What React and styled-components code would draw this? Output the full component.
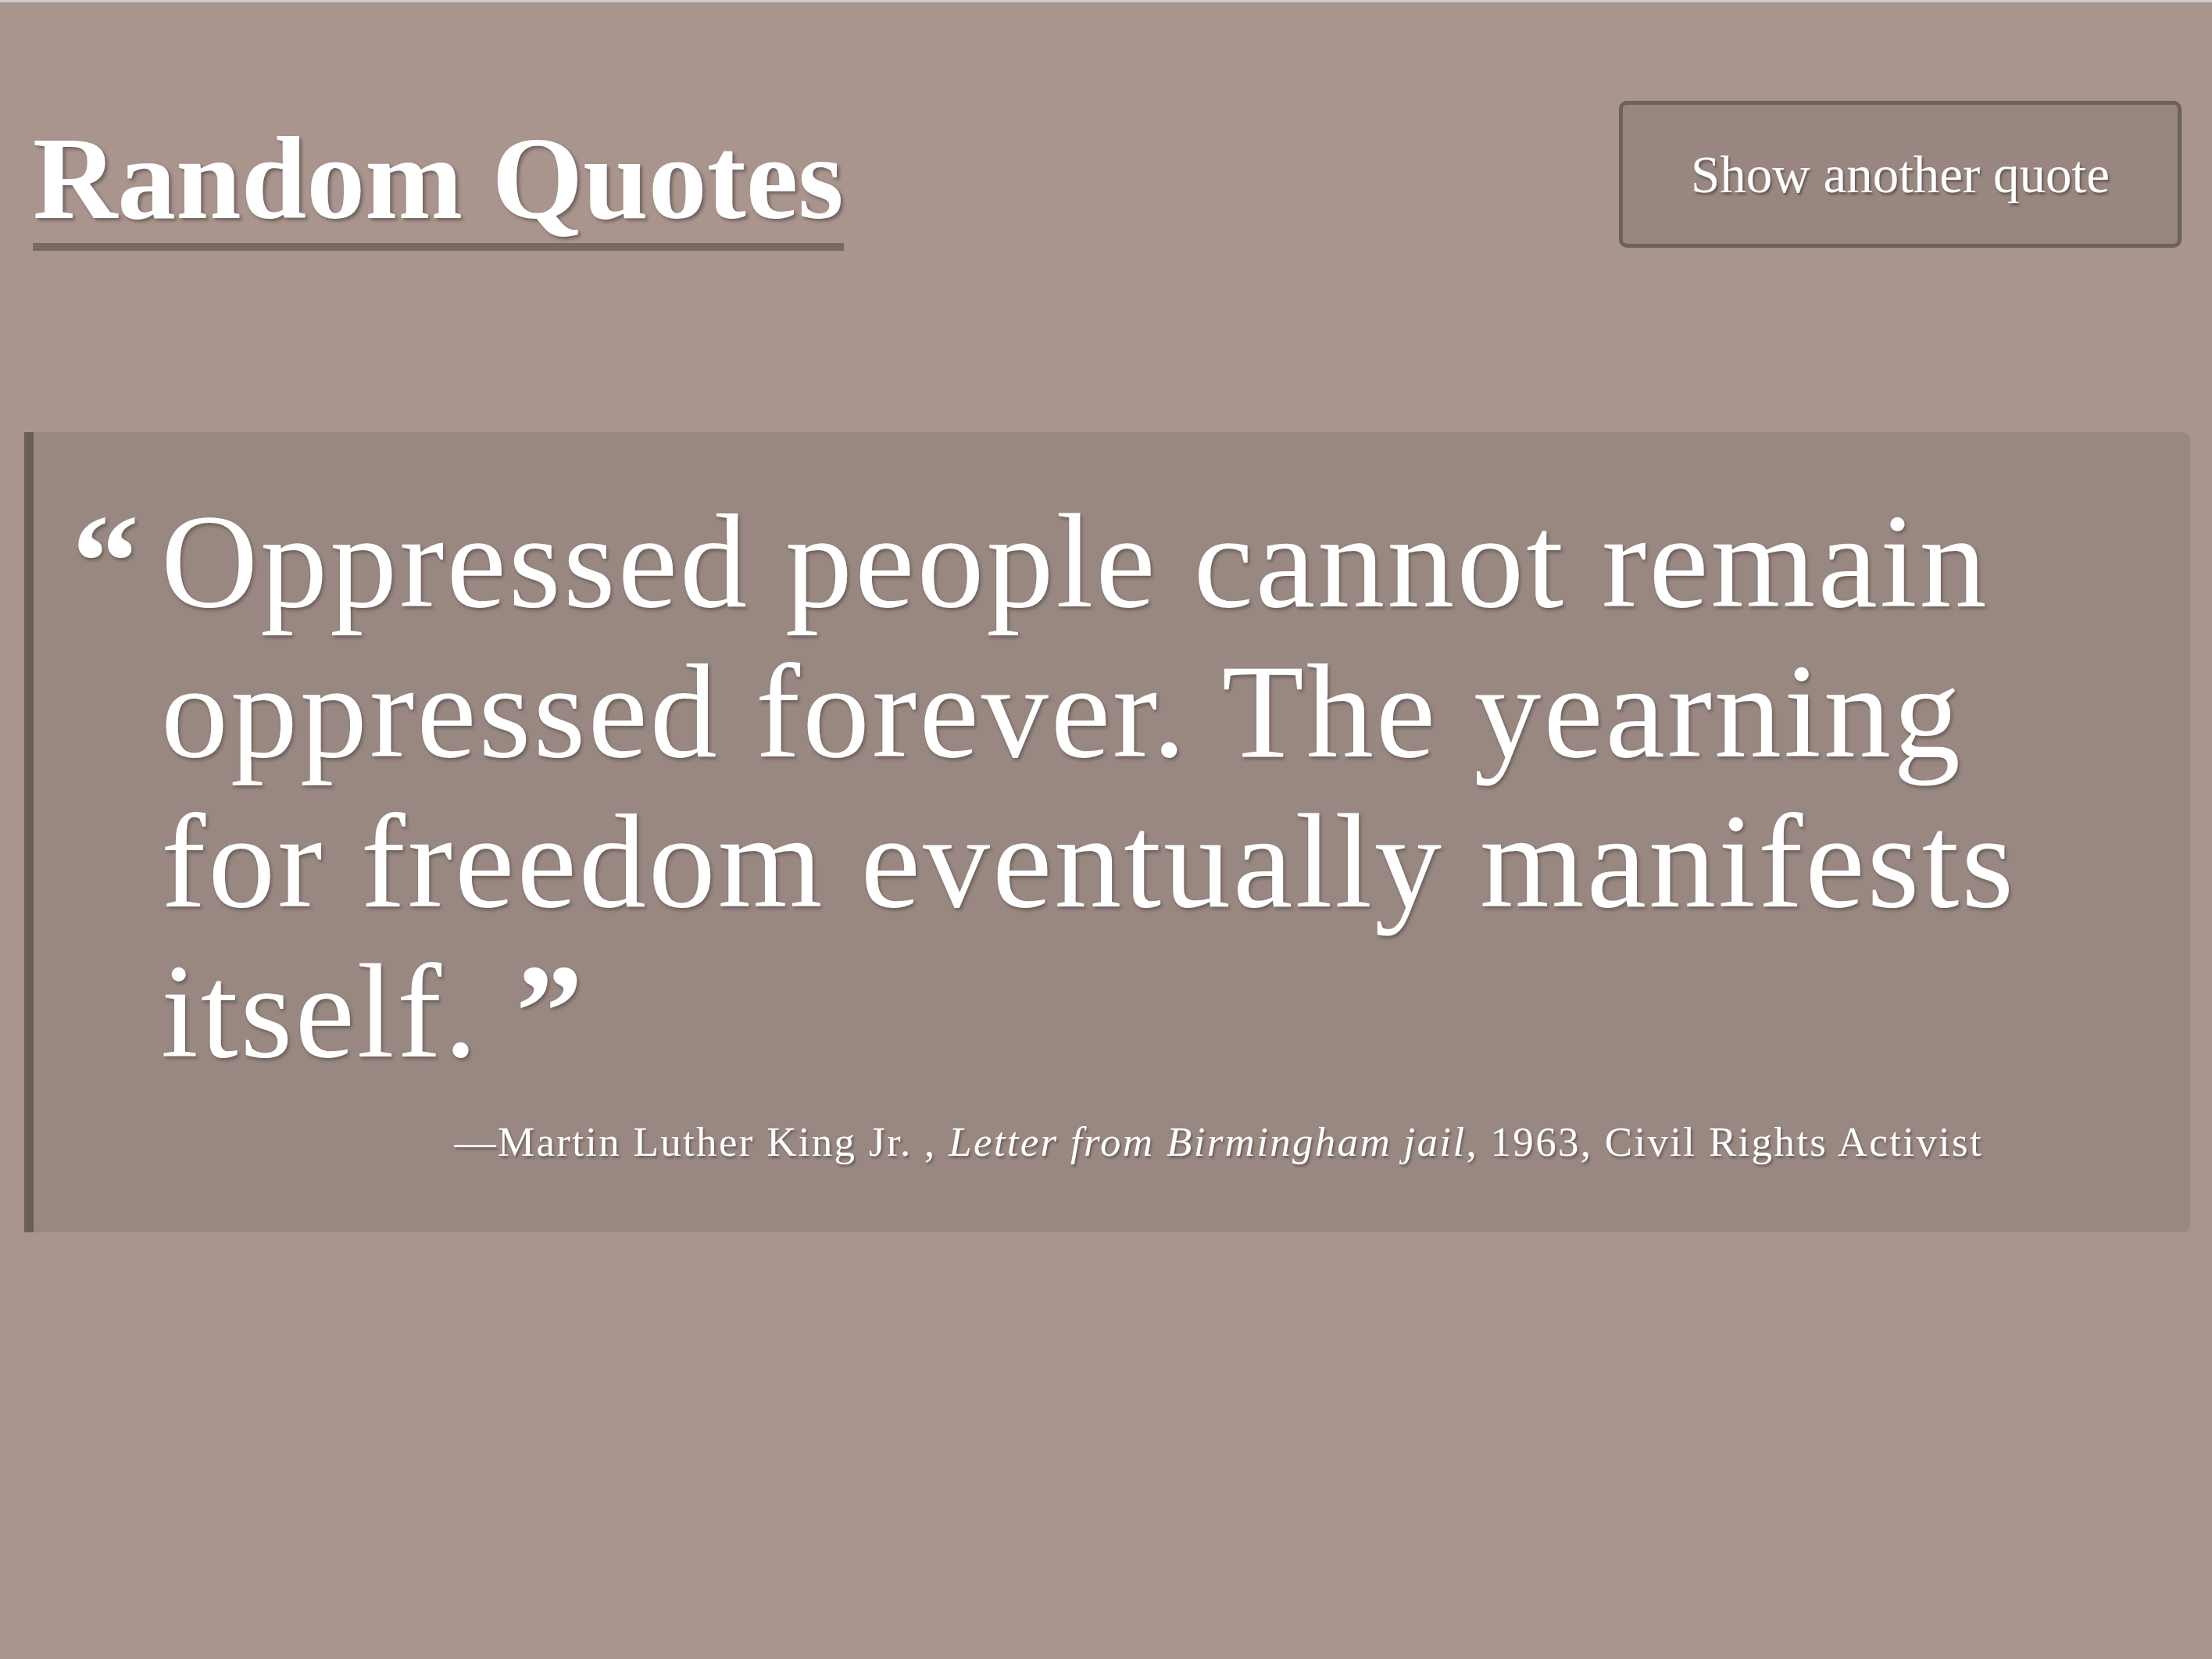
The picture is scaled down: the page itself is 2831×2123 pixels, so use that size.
import styled, { createGlobalStyle } from 'styled-components'

const GlobalStyle = createGlobalStyle`
    html, body {
        margin: 0;
        padding: 0;
        background: #aa958e;
    }
    body {
        border-top: 3px solid #d2cdcc;
        min-height: 2120px;
        font-family: 'Liberation Serif', 'Times New Roman', serif;
        color: #fff;
    }
`

const Page = styled.div`
    padding: 0 28px 0 31px;
`

const Header = styled.header`
    display: flex;
    justify-content: space-between;
    align-items: flex-start;
    padding: 0 11px;
`

const Title = styled.h1`
    display: inline-block;
    margin: 142px 0 0;
    font-size: 150px;
    font-weight: 700;
    line-height: 166px;
    border-bottom: 10px solid #776a65;
    text-shadow: 3px 3px 4px rgba(0, 0, 0, 0.35);
`

const Button = styled.button`
    margin-top: 126px;
    width: 720px;
    height: 188px;
    background: #998680;
    border: 5px solid #6e605b;
    border-radius: 10px;
    color: #fff;
    font-family: 'Liberation Serif', 'Times New Roman', serif;
    font-size: 67px;
    text-shadow: 2px 3px 3px rgba(0, 0, 0, 0.35);
    cursor: pointer;
`

const Card = styled.blockquote`
    margin: 232px 0 0;
    padding: 69px 0 83px 163px;
    background: #998781;
    border-left: 12px solid #6b5d58;
    border-radius: 0 10px 10px 0;
`

const Body = styled.div`
    width: 2430px;
`

const QuoteText = styled.p`
    margin: 0;
    font-size: 172px;
    line-height: 192px;
    letter-spacing: 3px;
    text-shadow: 2px 3px 4px rgba(0, 0, 0, 0.3);
`

// hanging opening mark, sits in the card's left padding
const Mark = styled.span`
    font-weight: 700;
    letter-spacing: 0;
    ${(props) => props.open && 'display: inline-block; width: 114px; margin-left: -114px;'}
`

const Footer = styled.footer`
    margin: 40px 98px 0 0;
    text-align: right;
    font-size: 53px;
    line-height: 1.2;
    letter-spacing: 2.3px;
    text-shadow: 2px 3px 3px rgba(0, 0, 0, 0.3);

    cite {
        font-style: italic;
    }
`

const quote = {
    text: 'Oppressed people cannot remain oppressed forever. The yearning for freedom eventually manifests itself.',
    author: 'Martin Luther King Jr.',
    source: 'Letter from Birmingham jail',
    year: '1963',
    role: 'Civil Rights Activist',
}

const App = () => {
    return (
        <Page>
            <GlobalStyle />
            <Header>
                <Title>Random Quotes</Title>
                <Button>Show another quote</Button>
            </Header>
            <Card>
                <Body>
                    <QuoteText>
                        <Mark open>“</Mark>
                        {quote.text} <Mark>”</Mark>
                    </QuoteText>
                    <Footer>
                        —{quote.author} , <cite>{quote.source}</cite>, {quote.year}, {quote.role}
                    </Footer>
                </Body>
            </Card>
        </Page>
    )
}

export default App
